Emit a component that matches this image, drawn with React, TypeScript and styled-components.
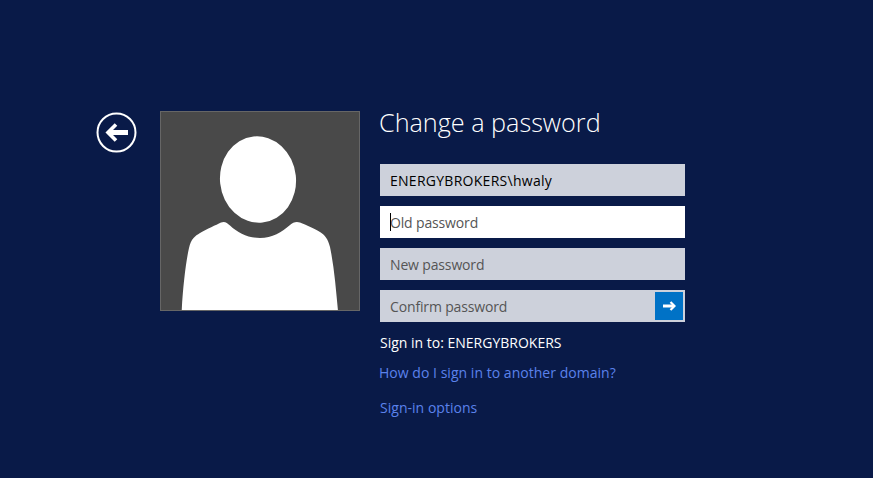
import React from "react";
import styled, { createGlobalStyle } from "styled-components";

const GlobalStyle = createGlobalStyle`
  html, body {
    margin: 0;
    height: 100%;
    background: #091a48;
  }
  body {
    font-family: "Open Sans", "Noto Sans", "Liberation Sans", sans-serif;
    overflow: hidden;
  }
`;

const Screen = styled.div`
  display: flex;
  align-items: flex-start;
  height: 478px;
  padding: 111px 0 0 96px;
  box-sizing: border-box;
  background: #091a48;
`;

const BackButton = styled.button`
  display: flex;
  width: 41px;
  height: 41px;
  margin: 1px 23px 0 0;
  padding: 0;
  border: 0;
  background: none;
`;

const Avatar = styled.div`
  width: 200px;
  height: 200px;
  box-sizing: border-box;
  border: 1px solid #666;
  background: #494949;
  overflow: hidden;
`;

const Form = styled.form`
  display: flex;
  flex-direction: column;
  width: 305px;
  margin: 0 0 0 20px;
`;

const Title = styled.h1`
  margin: -8px 0 22px -1px;
  font-size: 25.2px;
  line-height: 39px;
  font-weight: 300;
  color: #fff;
`;

const Fields = styled.div`
  display: flex;
  flex-direction: column;
  gap: 10px;
`;

const Field = styled.div<{ $focused?: boolean }>`
  position: relative;
  display: flex;
  height: 32px;
  background: ${(p) => (p.$focused ? "#fff" : "#cdd1db")};

  ${(p) =>
    p.$focused &&
    `&::before {
      content: "";
      position: absolute;
      left: 10px;
      top: 7px;
      width: 1px;
      height: 18px;
      background: #000;
    }`}
`;

const Input = styled.input`
  flex: 1;
  min-width: 0;
  padding: 0 0 0 10px;
  border: 0;
  outline: 0;
  background: transparent;
  font-family: inherit;
  font-size: 14px;
  letter-spacing: 0.27px;
  color: #000;

  &::placeholder {
    color: #555;
    opacity: 1;
    letter-spacing: -0.15px;
  }
`;

const Submit = styled.button`
  display: flex;
  align-items: center;
  justify-content: center;
  width: 28px;
  height: 28px;
  margin: 2px;
  padding: 0;
  border: 0;
  background: #0072c6;
`;

const SignInTo = styled.div`
  margin: 11px 0 0;
  font-size: 14px;
  line-height: 20px;
  color: #fff;
`;

const HelpLink = styled.a<{ $offset: number; $top: number }>`
  margin: ${(p) => p.$top}px 0 0 ${(p) => p.$offset}px;
  font-size: 14px;
  line-height: 20px;
  letter-spacing: 0.03px;
  color: #5b82ec;
`;

const BackIcon = () => (
  <svg width="41" height="41" viewBox="0 0 41 41" fill="none" stroke="#fff">
    <circle cx="20.5" cy="20.5" r="19" strokeWidth="2" />
    <path d="M32 20.5H13" strokeWidth="5" />
    <path d="M20 12.5 12 20.5 20 28.5" strokeWidth="3.6" />
  </svg>
);

const ArrowIcon = () => (
  <svg width="13" height="10" viewBox="0 0 13 10" fill="none" stroke="#fff">
    <path d="M0 5H11" strokeWidth="3" />
    <path d="M7.5 1 11.5 5 7.5 9" strokeWidth="2.2" />
  </svg>
);

const Silhouette = () => (
  <svg width="198" height="198" viewBox="1 1 198 198" fill="#fff">
    <ellipse cx="98" cy="68.5" rx="38" ry="43.3" transform="rotate(-6 98 68.5)" />
    <path d="M21.7 200C23 175 26 150 29 137C31 128 35 125 40 122C47 118 56 114 61 111.5C65 110 67 112 70 114.5C78 122 88 127 100 127C112 127 122 121 130 114C133 111.5 136 110 140 111.5C146 114 155 118 160 121C165 124 168 128 170 136C174 155 176 178 178 200Z" />
  </svg>
);

export default function App() {
  return (
    <Screen>
      <GlobalStyle />
      <BackButton type="button" aria-label="Back">
        <BackIcon />
      </BackButton>
      <Avatar>
        <Silhouette />
      </Avatar>
      <Form onSubmit={(e) => e.preventDefault()}>
        <Title>Change a password</Title>
        <Fields>
          <Field>
            <Input readOnly value="ENERGYBROKERS\hwaly" />
          </Field>
          <Field $focused>
            <Input type="password" placeholder="Old password" />
          </Field>
          <Field>
            <Input type="password" placeholder="New password" />
          </Field>
          <Field>
            <Input type="password" placeholder="Confirm password" />
            <Submit type="submit" aria-label="Submit">
              <ArrowIcon />
            </Submit>
          </Field>
        </Fields>
        <SignInTo>Sign in to: ENERGYBROKERS</SignInTo>
        <HelpLink $offset={-1} $top={10}>How do I sign in to another domain?</HelpLink>
        <HelpLink $offset={0} $top={15}>Sign-in options</HelpLink>
      </Form>
    </Screen>
  );
}
